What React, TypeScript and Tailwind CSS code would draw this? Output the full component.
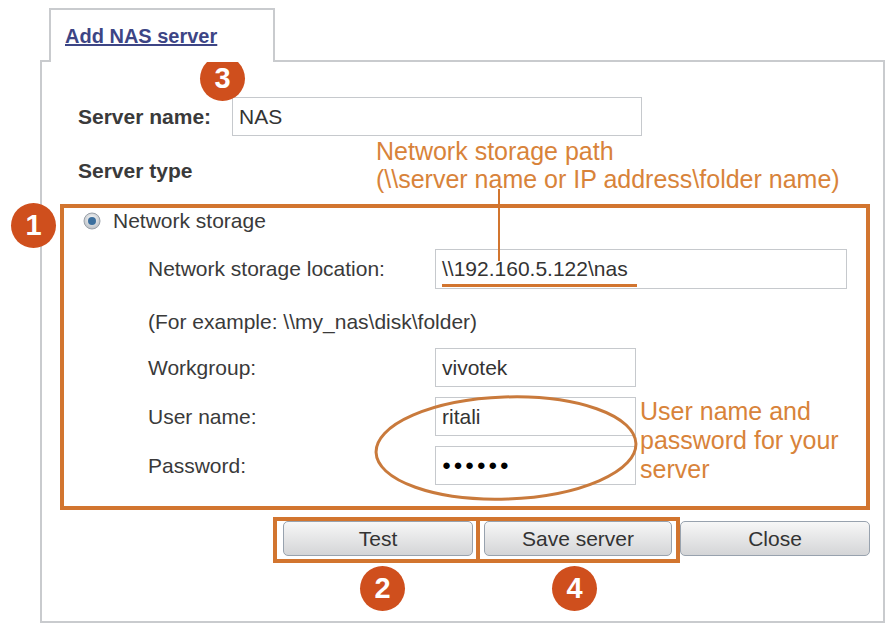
import React from 'react';

function Badge({ n, className }: { n: string; className: string }) {
  return (
    <div
      className={`absolute w-[45px] h-[45px] rounded-full bg-[#cf4f1d] flex items-center justify-center text-white font-bold text-[29px] leading-none ${className}`}
    >
      {n}
    </div>
  );
}

function Field({ children, className = '' }: { children: React.ReactNode; className?: string }) {
  return (
    <div className={`h-[39px] border-[1.5px] border-[#c6c9cd] bg-white flex items-center px-[6px] text-[21px] text-[#333] ${className}`}>
      {children}
    </div>
  );
}

function Btn({ label, className = '' }: { label: string; className?: string }) {
  return (
    <div
      className={`h-[35px] rounded-[5px] border border-[#98a2ae] bg-gradient-to-b from-[#f7f7f7] to-[#d4d5d7] flex items-center justify-center text-[21px] text-[#333] ${className}`}
    >
      {label}
    </div>
  );
}

export default function App() {
  const label = 'text-[21px] text-[#3a3a3a] leading-[24px]';
  const rows: [string, React.ReactNode][] = [
    ['Workgroup:', 'vivotek'],
    ['User name:', 'ritali'],
    ['Password:', <span className="text-[15px] tracking-[2.5px] text-black">●●●●●●</span>],
  ];
  return (
    <div className="w-[887px] h-[626px] bg-white overflow-hidden pt-[8px] font-['Liberation_Sans',Arial,sans-serif]">
      {/* tab */}
      <div className="ml-[49px] w-[226px] h-[54px] -mb-[2px] relative z-10 bg-white border-2 border-b-0 border-[#c9cbce] flex items-center pl-[14px]">
        <span className="text-[20px] font-bold underline text-[#3d4585]">Add NAS server</span>
      </div>

      {/* panel */}
      <div className="relative ml-[40px] w-[845px] h-[563px] border-2 border-[#c9cbce]">
        <div className="pt-[35px]">
          <div className="flex items-center">
            <span className={`${label} font-bold ml-[36px] w-[154px]`}>Server name:</span>
            <Field className="w-[410px]">NAS</Field>
          </div>
          <div className={`${label} font-bold ml-[36px] mt-[23px]`}>Server type</div>

          {/* network storage box */}
          <div className="ml-[18px] mt-[21px] w-[810px] h-[306px] border-4 border-[#d2752f] pt-[1px]">
            <div className="flex items-center ml-[19px] h-[24px]">
              <svg width="18" height="18" viewBox="0 0 18 18">
                <defs>
                  <radialGradient id="rg" cx="50%" cy="40%" r="60%">
                    <stop offset="0%" stopColor="#ffffff" />
                    <stop offset="100%" stopColor="#b9bec4" />
                  </radialGradient>
                </defs>
                <circle cx="9" cy="9" r="8" fill="url(#rg)" stroke="#9aa1a9" strokeWidth="1" />
                <circle cx="9" cy="9" r="4" fill="#3b6f9e" />
              </svg>
              <span className={`${label} ml-[12px]`}>Network storage</span>
            </div>
            <div className="flex items-center mt-[16px]">
              <span className={`${label} ml-[84px] w-[287px]`}>Network storage location:</span>
              <Field className="w-[412px] h-[40px]">\\192.160.5.122\nas</Field>
            </div>
            <div className={`${label} ml-[84px] mt-[21px]`}>(For example: \\my_nas\disk\folder)</div>
            <div className="flex flex-col gap-[10px] mt-[14px]">
              {rows.map(([l, v]) => (
                <div key={l} className="flex items-center">
                  <span className={`${label} ml-[84px] w-[287px]`}>{l}</span>
                  <Field className="w-[201px]">{v}</Field>
                </div>
              ))}
            </div>
          </div>

          {/* buttons */}
          <div className="flex ml-[231px] mt-[7px]">
            <div className="w-[207px] h-[46px] border-4 border-[#d2752f] pl-[6px]">
              <Btn label="Test" className="w-[190px]" />
            </div>
            <div className="w-[200px] h-[46px] border-4 border-l-0 border-[#d2752f] pl-[4px]">
              <Btn label="Save server" className="w-[188px]" />
            </div>
            <Btn label="Close" className="w-[190px] mt-[4px]" />
          </div>
        </div>

        {/* annotations */}
        <Badge n="3" className="left-[158px] top-[-6px]" />
        <Badge n="1" className="left-[-31px] top-[141px]" />
        <Badge n="2" className="left-[318px] top-[504px]" />
        <Badge n="4" className="left-[510px] top-[504px]" />

        <div className="absolute left-[334px] top-[75px] text-[25px] leading-[28px] text-[#d8833a] whitespace-nowrap">
          <div>Network storage path</div>
          <div>(\\server name or IP address\folder name)</div>
        </div>
        <div className="absolute left-[456px] top-[127px] w-[2px] h-[72px] bg-[#d2752f]" />
        <div className="absolute left-[400px] top-[222px] w-[195px] h-[3px] bg-[#d2752f]" />

        <svg className="absolute left-[331px] top-[332px]" width="266" height="108" viewBox="0 0 266 108">
          <ellipse cx="133" cy="54" rx="130" ry="51" fill="none" stroke="#c97a3c" strokeWidth="3" transform="rotate(-2 133 54)" />
        </svg>
        <div className="absolute left-[598px] top-[335px] text-[25px] leading-[29px] text-[#d8833a] whitespace-nowrap">
          <div>User name and</div>
          <div>password for your</div>
          <div>server</div>
        </div>
      </div>
    </div>
  );
}
